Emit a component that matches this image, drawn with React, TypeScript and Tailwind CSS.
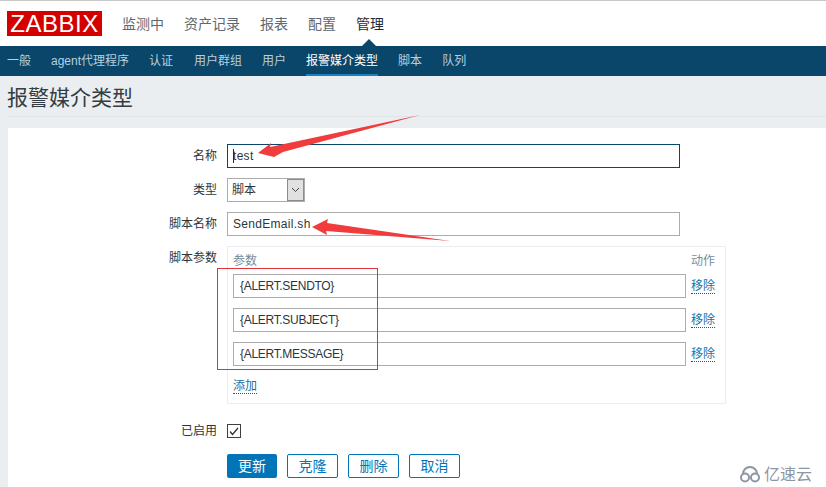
const mainMenu = ["监测中", "资产记录", "报表", "配置", "管理"];
const subMenu = ["一般", "agent代理程序", "认证", "用户群组", "用户", "报警媒介类型", "脚本", "队列"];
const params = ["{ALERT.SENDTO}", "{ALERT.SUBJECT}", "{ALERT.MESSAGE}"];
const font = "font-['Liberation_Sans','Noto_Sans_CJK_SC',sans-serif]";

function Row({ label, children, className = "" }: { label: string; children: React.ReactNode; className?: string }) {
  return (
    <div className={`flex ${className}`}>
      <div className="w-[219px] pr-[10px] text-right text-[12px] leading-[24px] text-[#2b363c]">{label}</div>
      {children}
    </div>
  );
}

function LinkText({ children }: { children: React.ReactNode }) {
  return <span className="border-b border-dotted border-[#0f5f94] text-[12px] leading-[15px] text-[#1f6ea3]">{children}</span>;
}

export default function App() {
  return (
    <div className={`relative h-[487px] w-[826px] overflow-hidden bg-[#ebeef0] ${font}`}>
      <header className="flex h-[46px] items-start border-t border-[#c8c8c8] bg-white pl-[7px] pt-[10px]">
        <div className="flex h-[25px] w-[95px] items-center justify-center bg-[#d40000] text-[24px] leading-none tracking-[0.5px] text-white">
          ZABBIX
        </div>
        <nav className="ml-[20px] flex gap-[20px] text-[14px] leading-[26px] text-[#5c6a72]">
          {mainMenu.map((m) => (
            <span key={m} className={m === "管理" ? "text-[#1f2c33]" : ""}>{m}</span>
          ))}
        </nav>
      </header>

      <nav className="relative flex h-[30px] gap-[20px] bg-[#0a466a] pl-[7px] text-[12px] leading-[30px] text-[#b8d0de]">
        <span className="absolute left-[362px] top-[-7px] h-0 w-0 border-x-[7px] border-b-[7px] border-x-transparent border-b-[#0a466a]" />
        {subMenu.map((m) => (
          <span
            key={m}
            className={m === "报警媒介类型" ? "border-b-2 border-[#1f80c0] text-white" : m === "认证" ? "pr-[1px]" : ""}
          >
            {m}
          </span>
        ))}
      </nav>

      <div className="pl-[7px]">
        <h1 className="h-[41px] border-b border-[#dfe4e7] text-[21px] font-normal leading-[44px] text-[#333d42]">报警媒介类型</h1>
        <div className="h-[11px]" />
      </div>

      <main className="ml-[8px] flex h-[359px] flex-col gap-[10px] bg-white pt-[16px]">
        <Row label="名称">
          <div className="relative flex h-[24px] w-[453px] items-center border border-[#0a466a] pl-[5px] text-[12px] tracking-[0.3px] text-[#2b363c]">
            test
            <span className="absolute left-[5px] top-[4px] h-[14px] w-px bg-[#1f2c33]" />
          </div>
        </Row>
        <Row label="类型">
          <div className="flex h-[24px] w-[78px] border border-[#acacac] text-[12px] leading-[22px] text-[#2b363c]">
            <span className="flex-1 pl-[4px]">脚本</span>
            <span className="flex w-[17px] items-center justify-center border border-[#8c8c8c] bg-[#e1e1e1]">
              <svg width="9" height="6" viewBox="0 0 9 6" fill="none" stroke="#444"><path d="M1 1l3.5 3.5L8 1" /></svg>
            </span>
          </div>
        </Row>
        <Row label="脚本名称">
          <div className="flex h-[24px] w-[453px] items-center border border-[#acacac] pl-[5px] text-[12px] tracking-[0.3px] text-[#2b363c]">SendEmail.sh</div>
        </Row>
        <Row label="脚本参数">
          <div className="flex h-[158px] w-[499px] flex-col border border-[#ebeef0] px-[5px] pt-[5px]">
            <div className="flex h-[22px] justify-between pr-[5px] text-[12px] leading-[18px] text-[#768d99]">
              <span>参数</span>
              <span>动作</span>
            </div>
            <div className="flex flex-col gap-[10px]">
              {params.map((p) => (
                <div key={p} className="flex h-[24px] items-start gap-[5px]">
                  <div className="flex h-[24px] w-[453px] items-center border border-[#acacac] pl-[6px] text-[12px] tracking-[-0.3px] text-[#2b363c]">{p}</div>
                  <div className="pt-[2px] leading-[18px]"><LinkText>移除</LinkText></div>
                </div>
              ))}
            </div>
            <div className="mt-[7px]"><LinkText>添加</LinkText></div>
          </div>
        </Row>
        <Row label="已启用" className="mt-[5px]">
          <div className="flex h-[24px] items-center">
            <span className="flex h-[14px] w-[14px] items-center justify-center border border-[#3a3f42]">
              <svg width="10" height="9" viewBox="0 0 10 9" fill="none" stroke="#2b2f33" strokeWidth="1.2"><path d="M1 4.5L3.5 7.5 9 1" /></svg>
            </span>
          </div>
        </Row>
        <div className="ml-[219px] mt-[1px] flex gap-[10px] text-[14px]">
          <button className="h-[24px] w-[50px] rounded-[2px] bg-[#0275b8] text-white">更新</button>
          {["克隆", "删除", "取消"].map((b) => (
            <button key={b} className="h-[24px] w-[51px] rounded-[2px] border border-[#0275b8] text-[#0275b8]">{b}</button>
          ))}
        </div>
      </main>

      {/* annotations drawn over the screenshot */}
      <svg className="absolute left-0 top-0" width="826" height="487" fill="#f03c3c">
        <polygon points="258,153 271,143 270,147 420,115 283,152 274,157" />
        <polygon points="312,227 328,219 327,223 450,241 326,231 327,235" />
        <rect x="217.5" y="268.5" width="160" height="101" fill="none" stroke="#e0343a" />
      </svg>

      <div className="absolute bottom-[4px] right-[14px] flex items-center gap-[3px] text-[16px] leading-none text-[#8d96a3]">
        <svg width="22" height="17" viewBox="0 0 22 17" fill="none" stroke="#8d96a3" strokeWidth="2">
          <path d="M4 8a7 7 0 0 1 14 0" />
          <circle cx="6" cy="11.5" r="4" />
          <circle cx="16" cy="11.5" r="4" />
        </svg>
        亿速云
      </div>
    </div>
  );
}
